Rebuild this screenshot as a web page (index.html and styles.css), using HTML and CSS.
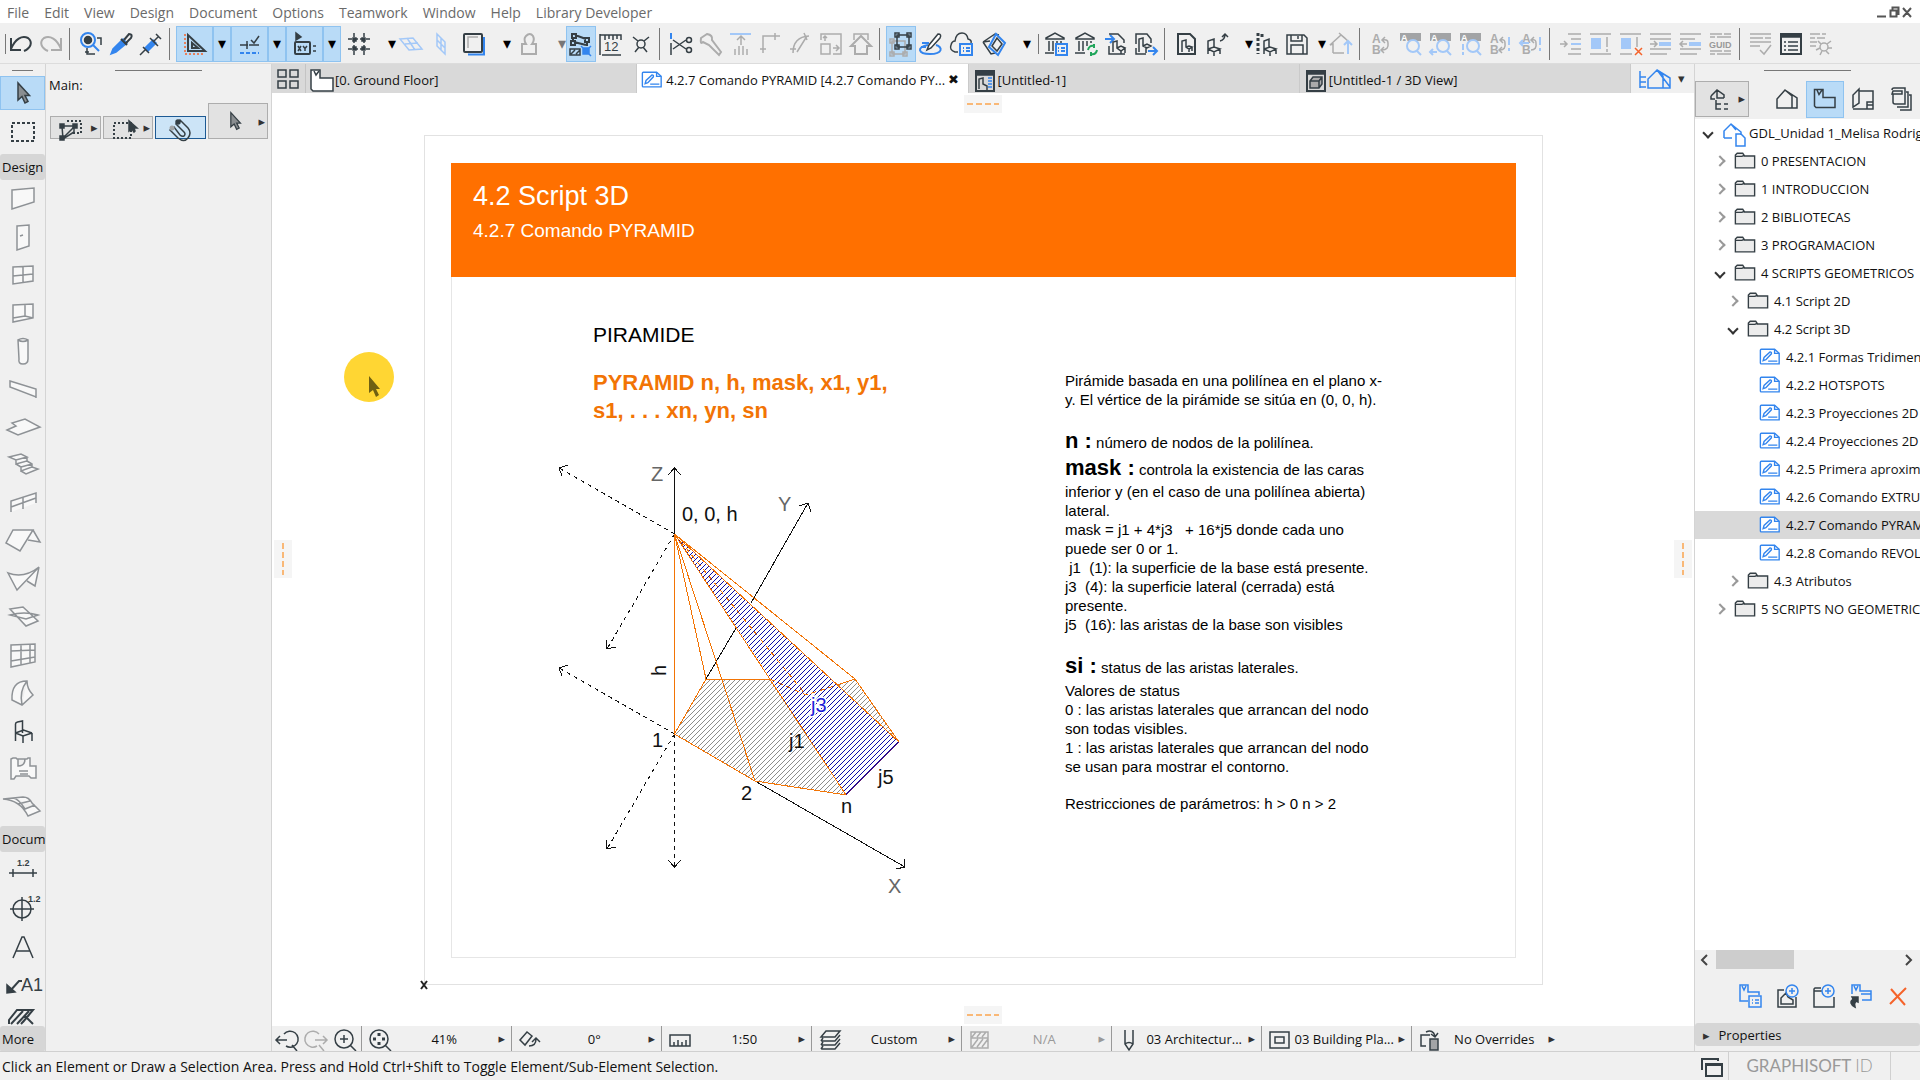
FILE: index.html
```html
<!DOCTYPE html>
<html lang="en">
<head>
    <meta charset="UTF-8">
    <meta name="viewport" content="width=device-width, initial-scale=1.0">
    <title>4.2.7 Comando PYRAMID</title>
    <link rel="stylesheet" href="styles.css">
</head>
<body>
    <!-- shared icons -->
    <svg class="defs" width="0" height="0">
        <symbol id="folder" viewBox="0 0 24 20"><path d="M1.500 17.500V3.500l2-2h6l2 3h11v13z" fill="#ececec"/><path d="M1.500 5h7l2.500-1"/></symbol>
        <symbol id="sheet" viewBox="0 0 24 20"><path d="M1.500 2.500q0-1 1-1H17l5 4.500v11.500H2.500q-1 0-1-1z" fill="#fff"/><path d="M17 1.500V6h5M10 14.500h10M4.500 14l1-3.500 6.500-6q2 0 1.500 2L7.500 13z"/></symbol>
        <symbol id="arrow" viewBox="0 0 24 24"><path d="M7 2v17l4-3.500 3 6.500 3-1.500-3-6h4.500z" fill="#8a8e91"/></symbol>
        <symbol id="plan" viewBox="0 0 24 24"><path d="M1.500 2.500h8.500v8h12v10H3l-1.500-1.500zM4 3l2 4.500L9 3"/></symbol>
        <symbol id="chair" viewBox="0 0 24 24"><path d="M4.500 22V5q0-1.500 2-2l5-1v12M4.500 14l7.500 3 9-3M12 17v7M21 14v8M4.500 14l8-3 8.500 3"/></symbol>
        <symbol id="house" viewBox="0 0 24 24"><path d="M2 21V12l8-9 7 6v12zM10 3l12 8v10h-5M17 9v12"/></symbol>
    </svg>

    <div class="menubar">
        <nav class="menus">
            <button>File</button>
            <button>Edit</button>
            <button>View</button>
            <button>Design</button>
            <button>Document</button>
            <button>Options</button>
            <button>Teamwork</button>
            <button>Window</button>
            <button>Help</button>
            <button>Library Developer</button>
        </nav>
        <svg class="window-controls" width="40" height="16" viewBox="0 0 40 16"><path d="M2 12.500h9M15.500 6.500h6v6h-6zM17.500 6V3.500h6V10h-2M28 4l8 9M36 4l-8 9"/></svg>
    </div>

    <div class="toolbar">
        <span class="sep short"></span>
        <button class="tb"><svg class="ic"><path d="M2 6v12h10M2 17C6 7 13 3 19 6c5 4 3 10-4 13" stroke-width="2"/></svg></button>
        <button class="tb"><svg class="ic g"><path d="M22 6v12H12M22 17C18 7 11 3 5 6c-5 4-3 10 4 13" stroke-width="2"/></svg></button>
        <span class="sep"></span>
        <button class="tb"><svg class="ic"><g class="b" stroke-width="2"><circle cx="9" cy="8" r="7"/><path d="M14 13l6 6"/></g><circle cx="9" cy="8" r="3.500" class="fd"/><path d="M18 6h4v7M8 16v6h8M6 20h4"/></svg></button>
        <button class="tb"><svg class="ic"><path d="M2 22l2-5L14 7l4 4L7 20z" class="fb b"/><path d="M12 7l6 6M15 8l5-6q4 0 2 4l-5 5" stroke-width="2"/></svg></button>
        <button class="tb"><svg class="ic"><path d="M6 16l8-8 3 3-8 8z" class="fb b"/><path d="M1 23l5-5M11 6l8 8M15 9l5-5M17 2l5 5M4 15l6 6"/></svg></button>
        <span class="sep"></span>
        <button class="tb split on"><svg class="ic"><path d="M2 2v20h19" class="o" stroke-dasharray="2 2"/><path d="M5 3v16h17zM9 11v5h6z" stroke-width="2"/></svg></button><button class="dd on">&#9662;</button>
        <button class="tb split on"><svg class="ic"><path d="M2 13h8M9 9v8M11 13h10M13 8l3 3 5-7" stroke-width="1.500"/><path d="M2 21h19" class="b" stroke-width="2" stroke-dasharray="4 2"/></svg></button><button class="dd on">&#9662;</button>
        <button class="tb split on"><svg class="ic"><path d="M3 1v7l5-3z" class="fd"/><rect x="2" y="10" width="15" height="12" rx="1" stroke-width="2"/><path d="M5 14l3 5M8 14l-3 5M10 14l2 2.500 2-2.500M12 16v3M20 14h3M20 19h3"/></svg></button><button class="dd on">&#9662;</button>
        <div class="group">
            <button class="tb"><svg class="ic"><path d="M7 1v22M17 1v22M1 7h22M1 17h22" stroke-dasharray="4 2"/><path class="fd" d="M6 6h3v3H6zM15 6h3v3h-3zM6 15h3v3H6zM15 15h3v3h-3z"/></svg></button><button class="dd">&#9662;</button>
            <button class="tb"><svg class="ic lb"><path d="M1 7l13-1 9 11-13 1zM6 12l13-1M8 6l8 12"/></svg></button>
            <button class="tb"><svg class="ic lb"><path d="M8 2l8 8v12l-8-8zM8 8l8 8M12 6v12"/></svg></button>
        </div>
        <div class="group">
            <button class="tb"><svg class="ic"><path d="M6 22.500h16V5" class="b" stroke-width="2"/><rect x="2" y="2" width="18" height="18" rx="1" stroke-width="2"/><path d="M6 16V5h10" class="g"/></svg></button><button class="dd">&#9662;</button>
        </div>
        <div class="group">
            <button class="tb"><svg class="ic g"><path d="M5 22V12h4q-3-5 0-8 4-4 7 0 2 4-1 8h4v10z" stroke-width="2"/></svg></button><button class="dd off">&#9662;</button>
        </div>
        <button class="tb on"><svg class="ic"><path d="M3 2h4v4H3zM16 6h4v4h-4zM2 9h4v4H2zM6 3l11 4M5 10l12 3M4 6v4M18 10v4" stroke-width="2"/><path d="M1 23v-6h10v6zM2 22l4-4M7 22l4-4" /><path class="fb b" d="M14 16h6v6h-6z"/><path d="M12 14l2 2M22 14l-2 2M22 24l-2-2" class="b"/></svg></button>
        <button class="tb"><svg class="ic"><path d="M1 23V2M1 3h21v5M6 3v5M10 3v4M14 3v5M18 3v4M3 23h19"/><text x="5" y="19" class="t12">12</text></svg></button>
        <button class="tb"><svg class="ic"><circle cx="12" cy="12" r="4"/><path d="M4 5l5 4M20 5l-5 4M6 20l4-5M18 20l-4-5"/></svg></button>
        <span class="sep"></span>
        <button class="tb"><svg class="ic"><path d="M2 1v6" class="b" stroke-width="2"/><path d="M2 11v12M4 8l13 9M4 17l13-9"/><circle cx="20" cy="8" r="2.500"/><circle cx="20" cy="18" r="2.500"/></svg></button>
        <button class="tb"><svg class="ic g"><path d="M4 10q-3 3-2-4L8 2q6 1 5 6l9 12-2 3L10 13z" stroke-width="2"/></svg></button>
        <button class="tb"><svg class="ic g"><path d="M1 2h21" class="lb" stroke-width="2"/><path d="M12 13V5M8 8l4-4 4 4M6 17v6M10 14v9M14 14v9M18 17v6"/></svg></button>
        <button class="tb"><svg class="ic g"><path d="M4 21V4h17M1 17h6M16 1v7" stroke-width="1.500"/></svg></button>
        <button class="tb"><svg class="ic g"><path d="M4 21Q4 5 20 4M1 17h6M15 1l3 7M8 20l10-16" stroke-width="1.500"/></svg></button>
        <button class="tb"><svg class="ic g"><path d="M2 8V2h20v20h-8M2 12h9v10H2zM6 9V4M4 6l2-2 2 2M14 16h6M17 13l3 3-3 3" stroke-width="1.500"/></svg></button>
        <button class="tb"><svg class="ic g"><path d="M5 8V2h14v6"/><path d="M6 22V14H2l10-10 10 10h-4v8z" stroke-width="2"/></svg></button>
        <span class="sep"></span>
        <button class="tb on"><svg class="ic"><path class="g" d="M3 9h13v13H3zM1 7h4v4H1zM1 20h4v4H1zM14 20h4v4h-4z"/><path d="M8 3h12v12H8zM6 1h4v4H6zM18 1h4v4h-4zM6 13h4v4H6zM18 13h4v4h-4z" stroke-width="1.500"/></svg></button>
        <button class="tb"><svg class="ic"><path class="b" d="M9 13c-12 2-10 9 2 9 13 0 13-7 6-9M3 11h7M2 15h5" stroke-width="2"/><path d="M8 18l2-5L19 2q4 0 2 4L12 16z" fill="#fff" stroke-width="1.500"/></svg></button>
        <button class="tb"><svg class="ic"><path d="M9 20H6q-6-2-4-7 1-4 4-4 1-8 7-8 5 0 6 6 4 1 3 4"/><path class="b" d="M11 12h12v11H11zM14 16h1M17 16h4M14 19h1M17 19h4" stroke-width="2"/></svg></button>
        <div class="group">
            <button class="tb"><svg class="ic"><path d="M1 10L13 2l4 1M1 10l8 12 4-1M1 10l7-1"/><path class="b" d="M7 15L14 2l9 9-7 12z" stroke-width="2"/><path d="M10 14l5-8 5 6-5 7z"/></svg></button><button class="dd">&#9662;</button>
        </div>
        <span class="sep short gap"></span>
        <button class="tb"><svg class="ic"><path d="M2 6l9-5 9 5v1H2zM5 9v10M9 9v10M13 9v4M17 9v4M1 21h9"/><path class="b" d="M12 12h11v11H12zM14 16h1M17 16h4M14 19h1M17 19h4" stroke-width="2"/></svg></button>
        <button class="tb"><svg class="ic"><path d="M2 6l9-5 9 5v1H2zM5 9v10M9 9v10M13 9v5M17 9v2M1 21h10"/><path class="gr" d="M14 18q1-5 6-4M20 12v4M23 18q-1 5-6 4M17 24v-4" stroke-width="2"/></svg></button>
        <button class="tb"><svg class="ic"><path class="b" d="M1 7h8M6 3l4 4-4 4" stroke-width="2"/><path d="M5 2h9l6 6v3M5 14v8h16" stroke-width="1.500"/><path d="M9 20V10l4-1v7l4 3 4-3-4-2-4 2M17 19v3M21 16v5"/></svg></button>
        <button class="tb"><svg class="ic"><path d="M2 12V2h11l4 5v4M2 16v6h10" stroke-width="1.500"/><path d="M5 20V7l4-1v8l4 2 4-2-4-2-4 2M12 16v5"/><path class="b" d="M14 19h8M19 15l4 4-4 4" stroke-width="2"/></svg></button>
        <span class="sep"></span>
        <button class="tb"><svg class="ic"><path d="M4 2h12l5 5v15H4z" stroke-width="2"/><path d="M8 20V9l4-1v7l3 2 3-2-3-1-3 1M15 17v3M18 15v4"/></svg></button>
        <button class="tb"><svg class="ic"><path d="M4 22V9l6-2v9M4 17l6 3 6-3-6-2-6 2M10 20v4M16 17v5" stroke-width="1.500"/><path d="M16 9q5-1 5-7M18 5l3-3 3 3"/></svg></button><button class="dd">&#9662;</button>
        <button class="tb"><svg class="ic"><path d="M2 1v21M6 2v3" stroke-width="3" stroke-dasharray="3 2"/><path d="M8 22V9l5-2v9M8 17l6 3 6-3-6-2-6 2M14 20v4M20 17v5" stroke-width="1.500"/></svg></button>
        <button class="tb narrow"><svg class="ic"><path d="M2 3h17l3 3v16H2zM6 3v6h11V3M13 4v3M6 22v-9h12v9" stroke-width="1.500"/></svg></button><button class="dd narrow">&#9662;</button>
        <button class="tb"><svg class="ic g"><path d="M4 21V12l-3 1L12 3l7 6M10 1l7 6M4 21h11" stroke-width="1.500"/><path class="lb" d="M19 22V10M15 13l4-4 4 4" stroke-width="2"/></svg></button>
        <span class="sep"></span>
        <button class="tb"><svg class="ic g"><text x="3" y="11" class="ab">A</text><text x="3" y="22" class="ab">B</text><path d="M13 18q7 0 6-7 0-4-5-3M16 5l-3 3 3 3M15 15l-3 3 3 3"/></svg></button>
        <button class="tb"><svg class="ic"><path class="fg" d="M1 1h21v8H1z"/><text x="2" y="9" class="aw">A</text><circle class="lb" cx="14" cy="14" r="6" stroke-width="2" fill="#f0f0f0"/><path class="lb" d="M18 19l4 4" stroke-width="2"/></svg></button>
        <button class="tb"><svg class="ic"><path class="fg" d="M1 1h21v8H1z"/><text x="2" y="9" class="aw">A</text><circle class="lb" cx="14" cy="14" r="6" stroke-width="2" fill="#f0f0f0"/><path class="lb" d="M18 19l4 4M8 20H1M4 17l-3 3 3 3" stroke-width="2"/></svg></button>
        <button class="tb"><svg class="ic"><path class="fg" d="M1 1h21v8H1z"/><text x="2" y="9" class="aw">A</text><circle class="lb" cx="14" cy="14" r="6" stroke-width="2" fill="#f0f0f0"/><path class="lb" d="M18 19l4 4M4 12v6M4 20v3" stroke-width="2"/></svg></button>
        <button class="tb"><svg class="ic g"><text x="1" y="11" class="ab">A</text><text x="1" y="22" class="ab">B</text><path d="M11 18q6 0 5-7 0-4-4-3M14 5l-3 3 3 3M13 15l-3 3 3 3"/><path class="lb" d="M20 5v8M20 16v3" stroke-width="2"/></svg></button>
        <button class="tb"><svg class="ic g"><text x="3" y="11" class="ab">A</text><text x="3" y="22" class="ab">B</text><path d="M12 18q6 0 5-7 0-4-4-3M15 5l-3 3 3 3"/><path class="lb" d="M21 5v8M21 16v3M10 11H1M4 8l-3 3 3 3" stroke-width="2"/></svg></button>
        <span class="sep"></span>
        <button class="tb"><svg class="ic g"><path d="M9 2h13M12 7h10M12 17h10M9 22h13M1 12h6M5 9l3 3-3 3"/><path class="lb" d="M12 12h10" stroke-width="2"/></svg></button>
        <button class="tb"><svg class="ic g"><path d="M1 2h21M1 22h21M18 5v10M18 17v3"/><path class="flb" d="M2 6h10v11H2z"/></svg></button>
        <button class="tb"><svg class="ic g"><path d="M1 2h21M1 22h12M18 5v10"/><path class="flb" d="M2 6h10v11H2z"/><path class="o" d="M16 16l7 7M23 16l-7 7"/></svg></button>
        <button class="tb"><svg class="ic g"><path d="M1 2h21M1 7h21M1 17h21M1 22h17M1 12h6M5 9l3 3-3 3" stroke-width="1.500"/><path class="flb" d="M10 10h12v4H10z"/></svg></button>
        <button class="tb"><svg class="ic g"><path d="M1 2h21M1 7h15M1 17h21M1 22h17M8 12H2M4 9l-3 3 3 3" stroke-width="1.500"/><path class="flb" d="M10 10h12v4H10z"/></svg></button>
        <button class="tb"><svg class="ic g"><path d="M1 2h12M15 2h7M1 5h5M8 5h14M1 19h12M15 19h7M1 22h5M8 22h14" stroke-width="1.500"/><text x="0" y="16" class="guid">GUID</text></svg></button>
        <span class="sep"></span>
        <button class="tb"><svg class="ic g"><path d="M1 2h21M1 6h13M16 6h6M1 10h21M1 14h10M11 18l4 4 7-9" stroke-width="1.500"/></svg></button>
        <button class="tb"><svg class="ic"><path d="M2 2h20v20H2z" stroke-width="2"/><path class="fd" d="M2 2h20v3H2z"/><path d="M5 10h2M9 10h10M5 14h2M9 14h10M5 18h2M9 18h10"/></svg></button>
        <button class="tb"><svg class="ic g"><path d="M1 2h10M13 2h4M1 6h5M8 6h8M1 10h7M1 14h6" stroke-width="1.500"/><circle cx="15" cy="15" r="4"/><path d="M12 12L9 9M18 12l4-3M11 16l-4 2M19 16h4M13 19l-2 4M17 19l3 3"/></svg></button>
    </div>

    <div class="main">
        <div class="toolbox">
            <span class="handle"></span>
            <button class="tool on"><svg class="ic"><use href="#arrow"/></svg></button>
            <button class="tool marquee"><svg class="ic"><path d="M1 3h22v18H1z" stroke-width="2" stroke-dasharray="3 2"/></svg></button>
            <div class="tool-head">Design</div>
            <button class="tool"><svg class="ic w"><path d="M1 3l22-2v14L1 22z"/></svg></button>
            <button class="tool"><svg class="ic w"><path d="M6 1l12-1v21L6 25zM9 11l3-1"/></svg></button>
            <button class="tool"><svg class="ic w"><path d="M2 4l20-1v15L2 21zM12 3v17M2 13l20-2"/></svg></button>
            <button class="tool"><svg class="ic w"><path d="M2 4l20-1v14L2 21zM14 3v12M2 17l12-2 8 2"/></svg></button>
            <button class="tool"><svg class="ic w"><path d="M7 1q5-3 10 0v19q0 5-5 5t-4-5zM7 1q5 3 10 0"/></svg></button>
            <button class="tool"><svg class="ic w"><path d="M-1 4l26 8v8L-1 10zM-1 4v6M25 12v9"/></svg></button>
            <button class="tool"><svg class="ic w"><path d="M-4 15l9-4-4-3 13-4 15 8-22 8z"/></svg></button>
            <button class="tool"><svg class="ic w"><path d="M-2 4l12-3 6 3-11 3zM5 7v4l11-3V4M5 11l5 3v4l11-4v-3l-5-3M10 14l11-3M10 18l5 3 12-5-6-2"/></svg></button>
            <button class="tool"><svg class="ic w"><path d="M0 21V10l25-8v10M0 16l25-9M12 6v12"/></svg></button>
            <button class="tool"><svg class="ic w"><path d="M2 1h20L9 22-5 14zM22 1l7 12-12-2"/></svg></button>
            <button class="tool"><svg class="ic w"><path d="M-3 6q16 6 31-6L6 23zM28 0l-4 19-8-5"/></svg></button>
            <button class="tool"><svg class="ic w"><path d="M-1 4l13-2 15 14-12 5zM-1 10q14-4 28 0l-12 4z"/></svg></button>
            <button class="tool"><svg class="ic w"><path d="M0 2l24-1v18L0 24zM0 8l24-1M0 18l24-4M10 2v20M19 1v19"/></svg></button>
            <button class="tool"><svg class="ic w"><path d="M11 24L1 19Q0 0 16 0q0 8 6 14zM16 0Q8 10 11 24"/></svg></button>
            <button class="tool"><svg class="ic"><use href="#chair"/></svg></button>
            <button class="tool"><svg class="ic w"><path d="M0 2l2-1h3l1 1h10l1-1h2v8h6v12h-5l-2-2H5l-2 3H0zM7 2v7q7 0 7-7M8 14h9M9 17h8"/></svg></button>
            <button class="tool"><svg class="ic w"><path d="M-8 4l20-2q6 0 9 6l8 8-12 5Q9 5-8 4zM2 3q5 0 12 11l10-4M7 9l12-3"/></svg></button>
            <div class="tool-head">Docum</div>
            <button class="tool"><svg class="ic"><text x="6" y="7" class="dim">1.2</text><path d="M-2 14h28M2 10v8M22 10v8"/></svg></button>
            <button class="tool"><svg class="ic"><text x="17" y="5" class="dim">1.2</text><circle cx="11" cy="12" r="9"/><path d="M-1 12h24M11 0v24"/></svg></button>
            <button class="tool"><svg class="ic"><path d="M2 23L11 2h2l9 21M5 16h14"/></svg></button>
            <button class="tool"><svg class="ic"><path class="fd" d="M-4 20v-8l8 7z"/><path d="M-1 18l9-10h3" stroke-width="2"/><text x="10" y="18" class="a1">A1</text></svg></button>
            <button class="tool hatch"><svg class="ic"><path d="M-2 20v-4L6 6h16L12 18M0 20L12 7M6 20L18 7M14 12l8 8M10 20l8-9" stroke-width="2"/></svg></button>
            <div class="tool-head last">More</div>
        </div>

        <div class="infobox">
            <span class="handle"></span>
            <div class="info-title">Main:</div>
            <div class="info-buttons">
                <button class="info"><svg class="ic"><path d="M8 3h14v12h-8" stroke-dasharray="2 2" stroke-width="2"/><path d="M3 8h12v6L4 21zM4 20l11-11"/><path class="fd" d="M1 6h4v4H1zM1 18h4v4H1zM14 6h4v4h-4z"/></svg><i>&#9656;</i></button>
                <button class="info"><svg class="ic"><path d="M2 5h17v15H2z" stroke-dasharray="2 2" stroke-width="2"/><path class="fd" d="M17 3v10l3-2 2 3 1-1-1-3h3z"/></svg><i>&#9656;</i></button>
                <button class="info pressed"><svg class="ic"><path d="M2 12l8 8q6 5 10 0 4-5 0-10l-8-8-4 4 8 8q2 2 0 4-2 1-4-1L6 9z"/><circle cx="4" cy="10" r="2.500" class="fg"/><circle cx="10" cy="4" r="2" class="fd"/></svg></button>
                <button class="info big"><svg class="ic"><use href="#arrow"/></svg><i>&#9656;</i></button>
            </div>
        </div>

        <div class="workspace">
            <div class="tabs">
                <button class="overview"><svg class="ic"><path d="M2 3h8v7H2zM14 3h8v7h-8zM2 14h8v7H2zM14 14h8v7h-8z"/></svg></button>
                <button class="tab"><svg class="ic"><path d="M1 1h9v8h13v13H3l-2-2z" fill="#fff"/><path d="M4 2l2 4 3-4"/></svg><span>[0. Ground Floor]</span></button>
                <button class="tab active"><svg class="ic b"><use href="#sheet"/></svg><span>4.2.7 Comando PYRAMID [4.2.7 Comando PY...</span><b>&#10006;</b></button>
                <button class="tab"><svg class="ic"><path d="M3 2h18v20H3z" stroke-width="2"/><path class="fd" d="M3 2h18v4H3z"/><path d="M6 20V10l4-1v6l4 2v4"/><path class="b" d="M15 9h4M15 12h4M15 15h4M15 18h4"/></svg><span>[Untitled-1]</span></button>
                <button class="tab"><svg class="ic"><path d="M3 2h18v20H3z" stroke-width="2"/><path class="fd" d="M3 2h18v3H3z"/><path d="M6 12l3-4h9v7l-3 4H6zM6 12h9v7M15 12l3-4" fill="#aaa"/></svg><span>[Untitled-1 / 3D View]</span></button>
                <button class="tab-menu"><svg class="ic b" viewBox="0 0 34 24"><path d="M2 4v17M2 10h6M2 15h6M2 20h6M10 21V12l9-9 6 6v12zM19 3l13 8v10h-7M19 3l13 17"/></svg><i>&#9662;</i></button>
            </div>

            <div class="canvas">
                <span class="grip top"></span>
                <span class="grip bottom"></span>
                <span class="grip left"></span>
                <span class="grip right"></span>
                <svg class="pointer" width="50" height="50" viewBox="0 0 50 50"><circle cx="25" cy="25" r="25" fill="#ffd633"/><path d="M25 24v17l4-3 3 7 3-2-3-6h4z" fill="#6f6012"/></svg>
                <div class="page">
                    <svg class="origin" width="10" height="10" viewBox="0 0 10 10"><path d="M2 1l6 8M8 1L2 9"/></svg>
                    <div class="frame">
                        <header class="band">
                            <h1>4.2 Script 3D</h1>
                            <h2>4.2.7 Comando PYRAMID</h2>
                        </header>
                        <div class="content">
                            <div class="figure">
                                <h3>PIRAMIDE</h3>
                                <p class="syntax">PYRAMID n, h, mask, x1, y1,<br>s1, . . . xn, yn, sn</p>
                                <svg class="diagram" width="420" height="470" viewBox="0 0 420 470">
                                    <defs>
                                        <pattern id="gray" width="5" height="5" patternUnits="userSpaceOnUse"><path d="M-1 1l2-2M0 5l5-5M4 6l2-2" stroke="#8c8c8c"/></pattern>
                                        <pattern id="blue" width="5" height="5" patternUnits="userSpaceOnUse"><path d="M-1 1l2-2M0 5l5-5M4 6l2-2" stroke="#0c0ca8"/></pattern>
                                    </defs>
                                    <!-- base j1 -->
                                    <path d="M144.500 294L176 239H240L316 355 225 341zM307 245l18-6 44 63z" fill="url(#gray)"/>
                                    <!-- lateral face j3 -->
                                    <path d="M144.500 94L316 355l53-53z" fill="url(#blue)"/>
                                    <g class="axis">
                                        <path d="M144.500 94V28M138 35l6.500-7 6.500 7"/>
                                        <path d="M176 239L206 188M221 163L278 63M269 66l9-3 3 9"/>
                                        <path d="M225 341L375 427M374 419l1 8-9 2"/>
                                    </g>
                                    <g class="axis dashed">
                                        <path d="M144.500 94L29 28M144.500 294L29 228M144.500 94L77 209M144.500 294L77 409M144.500 294V427"/>
                                    </g>
                                    <path class="axis" d="M38 25l-9 3 3 8M38 225l-9 3 3 8M76 200l1 9 9-2M76 400l1 9 9-2M138 420l6.500 7 6.500-7"/>
                                    <g class="edge">
                                        <path d="M144.500 294L176 239H240M307 245l18-6 44 63M316 355L225 341 144.500 294V94L176 239M144.500 94L225 341M144.500 94L316 355M144.500 94L369 302M144.500 94L325 239"/>
                                        <path d="M240 239l36 16 31-10M144.500 94L276 255" stroke-dasharray="5 4"/>
                                    </g>
                                    <path d="M316 355l53-53" stroke="#5b1670"/>
                                    <g class="label">
                                        <text x="121" y="41" class="soft">Z</text>
                                        <text x="248" y="71" class="soft">Y</text>
                                        <text x="358" y="453" class="soft">X</text>
                                        <text x="152" y="81">0, 0, h</text>
                                        <text x="122" y="307">1</text>
                                        <text x="211" y="360">2</text>
                                        <text x="311" y="373">n</text>
                                        <text x="259" y="308">j1</text>
                                        <text x="348" y="344">j5</text>
                                        <text x="281" y="272" class="face">j3</text>
                                        <text transform="translate(136 236) rotate(-90)">h</text>
                                    </g>
                                </svg>
                            </div>
                            <div class="notes">
                                <p>Pirámide basada en una polilínea en el plano x-<br>y. El vértice de la pirámide se sitúa en (0, 0, h).</p>
                                <p class="term"><b>n :</b> número de nodos de la polilínea.</p>
                                <p class="mask"><b>mask :</b> controla la existencia de las caras<br>inferior y (en el caso de una polilínea abierta)<br>lateral.<br>mask = j1 + 4*j3 &nbsp; + 16*j5 donde cada uno<br>puede ser 0 or 1.<br>&nbsp;j1 &nbsp;(1): la superficie de la base está presente.<br>j3 &nbsp;(4): la superficie lateral (cerrada) está<br>presente.<br>j5 &nbsp;(16): las aristas de la base son visibles</p>
                                <p class="term"><b>si :</b> status de las aristas laterales.</p>
                                <p>Valores de status<br>0 : las aristas laterales que arrancan del nodo<br>son todas visibles.<br>1 : las aristas laterales que arrancan del nodo<br>se usan para mostrar el contorno.</p>
                                <p class="limits">Restricciones de parámetros: h &gt; 0 n &gt; 2</p>
                            </div>
                        </div>
                    </div>
                </div>
            </div>

            <div class="quickbar">
                <div class="zooms">
                    <button><svg class="ic"><path d="M9 6a8 8 0 1 1 2 12M17 17l5 6M1 12h11M5 8l-4 4 4 4"/></svg></button>
                    <button><svg class="ic g"><path d="M15 6a8 8 0 1 0-2 12M15 17l5 6M23 12H11M19 8l4 4-4 4"/></svg></button>
                    <button><svg class="ic"><circle cx="11" cy="11" r="9"/><path d="M17 17l6 6M11 7v8M7 11h8"/></svg></button>
                </div>
                <button class="quick"><svg class="ic"><circle cx="11" cy="11" r="9"/><path d="M17 17l6 6"/><path d="M11 5v3M11 14v3M5 11h3M14 11h3" stroke-width="3"/></svg><span>41%</span><i>&#9656;</i></button>
                <button class="quick"><svg class="ic"><path d="M2 12l7-8 5 4-7 9zM11 18q7 0 7-7M14 14l4-4 4 4"/></svg><span>0°</span><i>&#9656;</i></button>
                <button class="quick"><svg class="ic"><path d="M2 7h20v11H2zM6 14v4M10 12v6M14 14v4M18 12v6"/></svg><span>1:50</span><i>&#9656;</i></button>
                <button class="quick"><svg class="ic"><path d="M3 9l5-6h14l-5 6zM3 13h14l5-6M3 17h14l5-6M3 21h14l5-6M3 13l2-3M3 17l2-3M3 21l2-3"/></svg><span>Custom</span><i>&#9656;</i></button>
                <button class="quick off"><svg class="ic g"><path d="M3 4h17v16H3zM3 10h17M4 9l4-5M9 9l4-5M14 9l4-5M4 19l6-8M9 19l6-8M14 19l6-8"/></svg><span>N/A</span><i>&#9656;</i></button>
                <button class="quick"><svg class="ic"><path d="M7 2v14l4 6 4-6V2M7 16q4-3 8 0"/></svg><span>03 Architectur...</span><i>&#9656;</i></button>
                <button class="quick"><svg class="ic"><path d="M2 4h19v16H2zM7 9h9v6H7z"/></svg><span>03 Building Pla...</span><i>&#9656;</i></button>
                <button class="quick"><svg class="ic"><path d="M8 18H3V7h9M8 4q7-3 9 4M13 6l4 3 3-4"/><path class="fg" d="M12 11h8v11h-8z"/><path d="M12 11h8v11h-8z"/></svg><span>No Overrides</span><i>&#9656;</i></button>
            </div>
        </div>

        <aside class="navigator">
            <div class="nav-head">
                <span class="handle"></span>
                <button class="chooser"><svg class="ic"><path d="M4 9l6-6 7 5v3M4 9v3h4M10 3v8h7M9 13v9h5M9 17h5M17 17h4M17 22h4"/></svg><i>&#9656;</i></button>
                <div class="maps">
                    <button><svg class="ic"><use href="#house"/></svg></button>
                    <button class="on"><svg class="ic"><use href="#plan"/></svg></button>
                    <button><svg class="ic"><path d="M2 20V8l6-6v14zM8 4h14v18H2M16 22v-7h6M16 18h6"/></svg></button>
                    <button><svg class="ic"><path d="M3 3q0-2 2-2h11v16H6q-2 0-2-2V7M4 4h9v3H3zM17 5h2v15H8M20 8h2v15H11"/></svg></button>
                </div>
            </div>
            <ul class="tree">
                <li><i class="open"></i><svg class="ic b"><path d="M2 16V9l7-7 5 6M9 2l10 8v3M2 16h8M14 12h5l4 4v8h-9z"/></svg><span>GDL_Unidad 1_Melisa Rodrig</span></li>
                <li class="l1"><i></i><svg class="ic"><use href="#folder"/></svg><span>0 PRESENTACION</span></li>
                <li class="l1"><i></i><svg class="ic"><use href="#folder"/></svg><span>1 INTRODUCCION</span></li>
                <li class="l1"><i></i><svg class="ic"><use href="#folder"/></svg><span>2 BIBLIOTECAS</span></li>
                <li class="l1"><i></i><svg class="ic"><use href="#folder"/></svg><span>3 PROGRAMACION</span></li>
                <li class="l1"><i class="open"></i><svg class="ic"><use href="#folder"/></svg><span>4 SCRIPTS GEOMETRICOS</span></li>
                <li class="l2"><i></i><svg class="ic"><use href="#folder"/></svg><span>4.1 Script 2D</span></li>
                <li class="l2"><i class="open"></i><svg class="ic"><use href="#folder"/></svg><span>4.2 Script 3D</span></li>
                <li class="l3"><svg class="ic b"><use href="#sheet"/></svg><span>4.2.1 Formas Tridimens</span></li>
                <li class="l3"><svg class="ic b"><use href="#sheet"/></svg><span>4.2.2 HOTSPOTS</span></li>
                <li class="l3"><svg class="ic b"><use href="#sheet"/></svg><span>4.2.3 Proyecciones 2D</span></li>
                <li class="l3"><svg class="ic b"><use href="#sheet"/></svg><span>4.2.4 Proyecciones 2D</span></li>
                <li class="l3"><svg class="ic b"><use href="#sheet"/></svg><span>4.2.5 Primera aproxima</span></li>
                <li class="l3"><svg class="ic b"><use href="#sheet"/></svg><span>4.2.6 Comando EXTRU</span></li>
                <li class="l3 selected"><svg class="ic b"><use href="#sheet"/></svg><span>4.2.7 Comando PYRAM</span></li>
                <li class="l3"><svg class="ic b"><use href="#sheet"/></svg><span>4.2.8 Comando REVOL</span></li>
                <li class="l2"><i></i><svg class="ic"><use href="#folder"/></svg><span>4.3 Atributos</span></li>
                <li class="l1"><i></i><svg class="ic"><use href="#folder"/></svg><span>5 SCRIPTS NO GEOMETRIC</span></li>
            </ul>
            <div class="hscroll">
                <svg width="10" height="14" viewBox="0 0 10 14"><path d="M8 2L3 7l5 5"/></svg>
                <span class="thumb"></span>
                <svg width="10" height="14" viewBox="0 0 10 14"><path d="M2 2l5 5-5 5"/></svg>
            </div>
            <div class="nav-actions">
                <button><svg class="ic b"><path d="M10 17H2V1h8v7h11v3M4 2l2 4 2-4M11 12h12v11H11zM14 16h1M17 16h4M14 19h1M17 19h4"/></svg></button>
                <button><svg class="ic"><path d="M9 6H3v17h18V13M6 20v-6l5-5 2 4 5 3v4z" stroke-width="1.500"/><circle class="b" cx="17" cy="7" r="6"/><path class="b" d="M17 4v6M14 7h6"/></svg></button>
                <button><svg class="ic"><path d="M2 7v16h20V13M2 7V5l1-1h6M2 7h8" stroke-width="1.500"/><circle class="b" cx="16" cy="7" r="6"/><path class="b" d="M16 4v6M13 7h6"/></svg></button>
                <button><svg class="ic"><path class="b" d="M3 10V1h8v6h11v9h-9M5 2l2 4 2-4M12 10h10M9 14H7"/><path class="fd" d="M3 13h6v5l-2-1q-2 2-1 6-7-4-2-8z"/></svg></button>
                <button><svg class="ic o"><path d="M5 5l14 16M20 4L4 20" stroke-width="2"/></svg></button>
            </div>
            <button class="properties"><i>&#9656;</i>Properties</button>
        </aside>
    </div>

    <footer class="status">
        <span class="hint">Click an Element or Draw a Selection Area. Press and Hold Ctrl+Shift to Toggle Element/Sub-Element Selection.</span>
        <div class="account">
            <button><svg class="ic"><path d="M2 15V4h16M2 4h16v2M6 9h16v12H6zM6 10h16" stroke-width="2"/></svg></button>
            <span class="brand">GRAPHISOFT <em>ID</em></span>
        </div>
    </footer>
</body>
</html>
```
FILE: styles.css
```css
* {
    box-sizing: border-box;
}
body {
    margin: 0;
    height: 100vh;
    display: flex;
    flex-direction: column;
    overflow: hidden;
    background-color: #f0f0f0;
    font-family: "Open Sans", "Noto Sans", sans-serif;
    font-size: 13px;
    color: #111;
}
button {
    border: none;
    padding: 0;
    margin: 0;
    background: none;
    font: inherit;
    color: inherit;
}
i {
    font-style: normal;
    font-family: "DejaVu Sans", sans-serif;
    color: #333;
}
.defs {
    position: absolute;
}
/* icons */
.ic {
    width: 24px;
    height: 24px;
    flex: none;
    display: block;
    overflow: visible;
    fill: none;
    stroke: #353f45;
    stroke-width: 1.5;
}
.ic.b, .ic .b { stroke: #3385ee; }
.ic.g, .ic .g { stroke: #acacac; }
.ic.lb, .ic .lb { stroke: #a3c8f8; }
.ic.o, .ic .o { stroke: #f5632a; }
.ic .gr { stroke: #1fa55a; }
.ic.w { stroke: #8e9296; fill: #f8f8f8; }
.ic .fd { fill: #353f45; }
.ic .fb { fill: #3385ee; }
.ic .fg { fill: #a2a4a6; stroke: none; }
.ic .flb { fill: #a3c8f8; stroke: none; }
.ic text {
    stroke: none;
    fill: #353f45;
    font-family: "Liberation Sans", Arial, sans-serif;
}
.ic .t12 { font-size: 13px; }
.ic .ab { font-size: 12px; fill: #acacac; font-weight: bold; }
.ic .aw { font-size: 9px; fill: #fff; font-weight: bold; }
.ic .guid { font-size: 9px; fill: #999; font-weight: bold; }
.ic .dim { font-size: 9px; font-weight: bold; }
.ic .a1 { font-size: 18px; }

/* menu */
.menubar {
    height: 23px;
    flex: none;
    display: flex;
    justify-content: space-between;
    background-color: #fff;
    padding: 1px 5px 0 7px;
}
.menus {
    display: flex;
    gap: 15px;
    font-size: 14px;
    color: #6a6a6a;
}
.window-controls {
    margin-top: 3px;
    fill: none;
    stroke: #555;
    stroke-width: 2;
}

/* toolbar */
.toolbar {
    height: 41px;
    flex: none;
    display: flex;
    align-items: center;
    padding: 2px 0 0 5px;
    border-bottom: 1px solid #dcdcdc;
}
.sep {
    width: 1px;
    height: 32px;
    margin: 0 6px 0 3px;
    background-color: #777;
    flex: none;
}
.sep.short {
    height: 20px;
    margin: 0;
}
.sep.gap {
    margin: 0 2px 0 7px;
}
.tb {
    width: 30px;
    height: 36px;
    display: flex;
    align-items: center;
    justify-content: center;
    flex: none;
}
.tb.split {
    width: 37px;
}
.tb.narrow {
    width: 27px;
}
.dd {
    width: 22px;
    height: 36px;
    font-family: "DejaVu Sans", sans-serif;
    font-size: 16px;
    line-height: 34px;
    text-align: right;
    color: #000;
    flex: none;
}
.dd.narrow {
    width: 16px;
}
.dd.off {
    color: #777;
}
.tb.on, .dd.on, .tool.on, .maps .on {
    background-color: #b9dbf7;
    border: 1px solid #8fc3f0;
}
.dd.on {
    width: 18px;
    text-align: center;
}
.group {
    display: flex;
    margin-left: 3px;
}

.main {
    flex: 1;
    min-height: 0;
    display: grid;
    grid-template-columns: 46px 226px 1fr 226px;
}
.handle {
    display: block;
    height: 1px;
    background-color: #777;
}

/* toolbox */
.toolbox {
    border-right: 1px solid #d4d4d4;
    display: flex;
    flex-direction: column;
    min-height: 0;
    overflow: hidden;
}
.toolbox .handle {
    width: 21px;
    margin: 6px 12px 5px;
    flex: none;
}
.tool {
    height: 38px;
    width: 45px;
    flex: none;
    display: flex;
    align-items: center;
    justify-content: center;
}
.tool.on {
    height: 34px;
}
.tool.marquee {
    height: 44px;
}
.tool.hatch {
    height: 22px;
    overflow: hidden;
    align-items: flex-start;
}
.tool-head {
    height: 26px;
    line-height: 26px;
    padding-left: 2px;
    background-color: #d6d6d6;
    border-radius: 3px;
    flex: none;
}

/* info box */
.infobox {
    border-right: 1px solid #d4d4d4;
    padding: 6px 3px;
}
.infobox .handle {
    width: 87px;
    margin: 0 auto;
}
.info-title {
    line-height: 20px;
    margin: 4px 0 8px;
}
.info-buttons {
    display: flex;
    align-items: flex-end;
    gap: 2px;
    padding-left: 1px;
}
.info {
    width: 51px;
    height: 23px;
    display: flex;
    align-items: center;
    justify-content: space-between;
    padding: 0 2px 0 8px;
    background-color: #e2e2e2;
    border: 1px solid #adadad;
}
.info .ic {
    width: 24px;
    height: 20px;
}
.info.pressed {
    justify-content: center;
    padding: 0;
    background-color: #cce4f7;
    border-color: #1d5a94;
}
.info.big {
    width: 61px;
    height: 36px;
    padding-left: 14px;
}

/* tabs */
.workspace {
    display: flex;
    flex-direction: column;
    min-width: 0;
}
.tabs {
    height: 29px;
    flex: none;
    display: flex;
    background-color: #d9d9d9;
}
.overview {
    width: 34px;
    padding-left: 4px;
    border-right: 1px solid #c4c4c4;
}
.tab {
    flex: 1;
    display: flex;
    align-items: center;
    gap: 3px;
    padding: 2px 0 0 4px;
    border-right: 1px solid #cacaca;
    white-space: nowrap;
}
.tab .ic {
    width: 22px;
    height: 22px;
}
.tab.active {
    background-color: #fff;
}
.tab b {
    font-family: "DejaVu Sans", sans-serif;
}
.tab-menu {
    width: 63px;
    display: flex;
    align-items: center;
    gap: 6px;
    padding-left: 7px;
    background-color: #f0f0f0;
}
.tab-menu .ic {
    width: 34px;
}

/* drawing area */
.canvas {
    flex: 1;
    min-height: 0;
    position: relative;
    background-color: #fff;
    padding: 42px 151px 41px 152px;
}
.grip {
    position: absolute;
    width: 38px;
    height: 18px;
    background-color: #f5f5f5;
    display: flex;
    align-items: center;
    justify-content: center;
}
.grip::before {
    content: "";
    width: 32px;
    height: 2px;
    background: repeating-linear-gradient(90deg, #f9b877 0 6px, transparent 6px 9px);
}
.grip.top, .grip.bottom {
    left: calc(50% - 19px);
}
.grip.top { top: 2px; }
.grip.bottom { bottom: 2px; }
.grip.left, .grip.right {
    width: 18px;
    height: 38px;
    top: 447px;
}
.grip.left { left: 2px; }
.grip.right { right: 2px; }
.grip.left::before, .grip.right::before {
    width: 2px;
    height: 32px;
    background: repeating-linear-gradient(180deg, #f9b877 0 6px, transparent 6px 9px);
}
.pointer {
    position: absolute;
    left: 72px;
    top: 259px;
}
.page {
    position: relative;
    height: 100%;
    border: 1px solid #e2e2e2;
    padding: 27px 26px 26px;
}
.origin {
    position: absolute;
    left: -6px;
    bottom: -6px;
    stroke: #222;
    stroke-width: 2;
}
.frame {
    height: 100%;
    border: 1px solid #e6e6e6;
    font-family: "Liberation Sans", Arial, sans-serif;
    color: #000;
}
.band {
    height: 114px;
    margin: -1px -1px 0;
    padding: 17px 22px;
    background-color: #ff7000;
    color: #fff;
}
h1, h2, h3, p {
    margin: 0;
    font-weight: normal;
}
h1 {
    font-size: 27px;
    line-height: 32px;
}
h2 {
    font-size: 19px;
    line-height: 28px;
    margin-top: 5px;
}
.content {
    display: grid;
    grid-template-columns: 535px 1fr;
    padding-left: 78px;
}
.figure h3 {
    font-size: 21px;
    line-height: 28px;
    padding: 44px 0 0 63px;
}
.syntax {
    font-size: 22px;
    line-height: 28px;
    font-weight: bold;
    color: #f27405;
    padding: 20px 0 0 63px;
}
.diagram {
    display: block;
    margin-top: 15px;
    shape-rendering: crispEdges;
}
.axis {
    fill: none;
    stroke: #111;
}
.dashed {
    stroke-dasharray: 4 4;
}
.edge {
    fill: none;
    stroke: #f27405;
}
.label text {
    font-size: 20px;
    fill: #111;
}
.label .soft {
    fill: #666;
}
.label .face {
    fill: #1c1cd8;
    stroke: #fff;
    stroke-width: 3px;
    paint-order: stroke;
}
.notes {
    padding-top: 94px;
    font-size: 15px;
    line-height: 19px;
    white-space: nowrap;
}
.notes b {
    font-size: 22px;
}
.notes .term {
    margin-top: 18px;
    line-height: 27px;
}
.notes .mask::first-line {
    line-height: 24px;
}
.notes .limits {
    margin-top: 18px;
}

/* quick options */
.quickbar {
    height: 25px;
    flex: none;
    display: flex;
}
.zooms {
    display: flex;
    gap: 9px;
    width: 89px;
    padding-left: 3px;
}
.quickbar .ic {
    width: 22px;
    height: 22px;
}
.zooms .ic {
    width: 20px;
}
.quick {
    width: 150px;
    display: flex;
    align-items: center;
    padding: 0 6px;
    border-left: 1px solid #999;
}
.quick span {
    flex: 1;
    text-align: center;
    white-space: nowrap;
}
.quick.off, .quick.off i {
    color: #999;
}

/* navigator */
.navigator {
    border-left: 1px solid #d4d4d4;
    display: flex;
    flex-direction: column;
    min-width: 0;
    min-height: 0;
    overflow: hidden;
}
.nav-head {
    height: 55px;
    flex: none;
    display: flex;
    flex-wrap: wrap;
    justify-content: space-between;
}
.nav-head .handle {
    width: 87px;
    margin: 6px 69px 8px;
}
.chooser {
    width: 54px;
    height: 36px;
    display: flex;
    align-items: center;
    justify-content: space-between;
    padding: 0 3px 0 11px;
    background-color: #e2e2e2;
    border: 1px solid #adadad;
}
.maps {
    display: flex;
}
.maps button {
    width: 38px;
    height: 37px;
    display: flex;
    align-items: center;
    justify-content: center;
}
.tree {
    flex: 1;
    min-height: 0;
    overflow: hidden;
    margin: 0;
    padding: 0;
    list-style: none;
    background-color: #fff;
}
.tree li {
    height: 28px;
    display: flex;
    align-items: center;
    gap: 5px;
    padding-left: 9px;
    white-space: nowrap;
}
.tree .l1 { padding-left: 21px; }
.tree .l2 { padding-left: 34px; }
.tree .l3 { padding-left: 64px; }
.tree .ic {
    width: 22px;
    height: 22px;
}
.tree i {
    flex: none;
    width: 8px;
    height: 8px;
    margin: 0 5px 0 0;
    border: solid #999;
    border-width: 2px 2px 0 0;
    transform: rotate(45deg);
}
.tree i.open {
    border-color: #333;
    transform: rotate(135deg);
}
.tree .selected {
    background-color: #d9d9d9;
}
.hscroll {
    height: 19px;
    flex: none;
    display: flex;
    align-items: center;
    padding: 0 6px 0 4px;
    fill: none;
    stroke: #444;
    stroke-width: 2;
}
.thumb {
    width: 78px;
    height: 19px;
    margin: 0 auto 0 7px;
    background-color: #cdcdcd;
}
.nav-actions {
    height: 54px;
    flex: none;
    display: flex;
    align-items: center;
    justify-content: flex-end;
    gap: 13px;
    padding-right: 10px;
}
.properties {
    height: 23px;
    flex: none;
    margin-bottom: 5px;
    padding-left: 8px;
    text-align: left;
    background-color: #d6d6d6;
    border-radius: 3px;
}
.properties i {
    margin-right: 9px;
}

/* status line */
.status {
    height: 29px;
    flex: none;
    display: flex;
    align-items: center;
    justify-content: space-between;
    border-top: 1px solid #d0d0d0;
    padding-left: 2px;
    font-size: 14px;
}
.account {
    display: flex;
    align-items: stretch;
    height: 28px;
    width: 220px;
}
.account button {
    width: 28px;
}
.account .ic {
    width: 22px;
    height: 22px;
}
.brand {
    flex: none;
    width: 163px;
    border: solid #d0d0d0;
    border-width: 0 1px;
    text-align: center;
    font-family: Lato, sans-serif;
    font-size: 17px;
    line-height: 28px;
    color: #999;
}
.brand em {
    font-style: normal;
    font-weight: 300;
}
```
